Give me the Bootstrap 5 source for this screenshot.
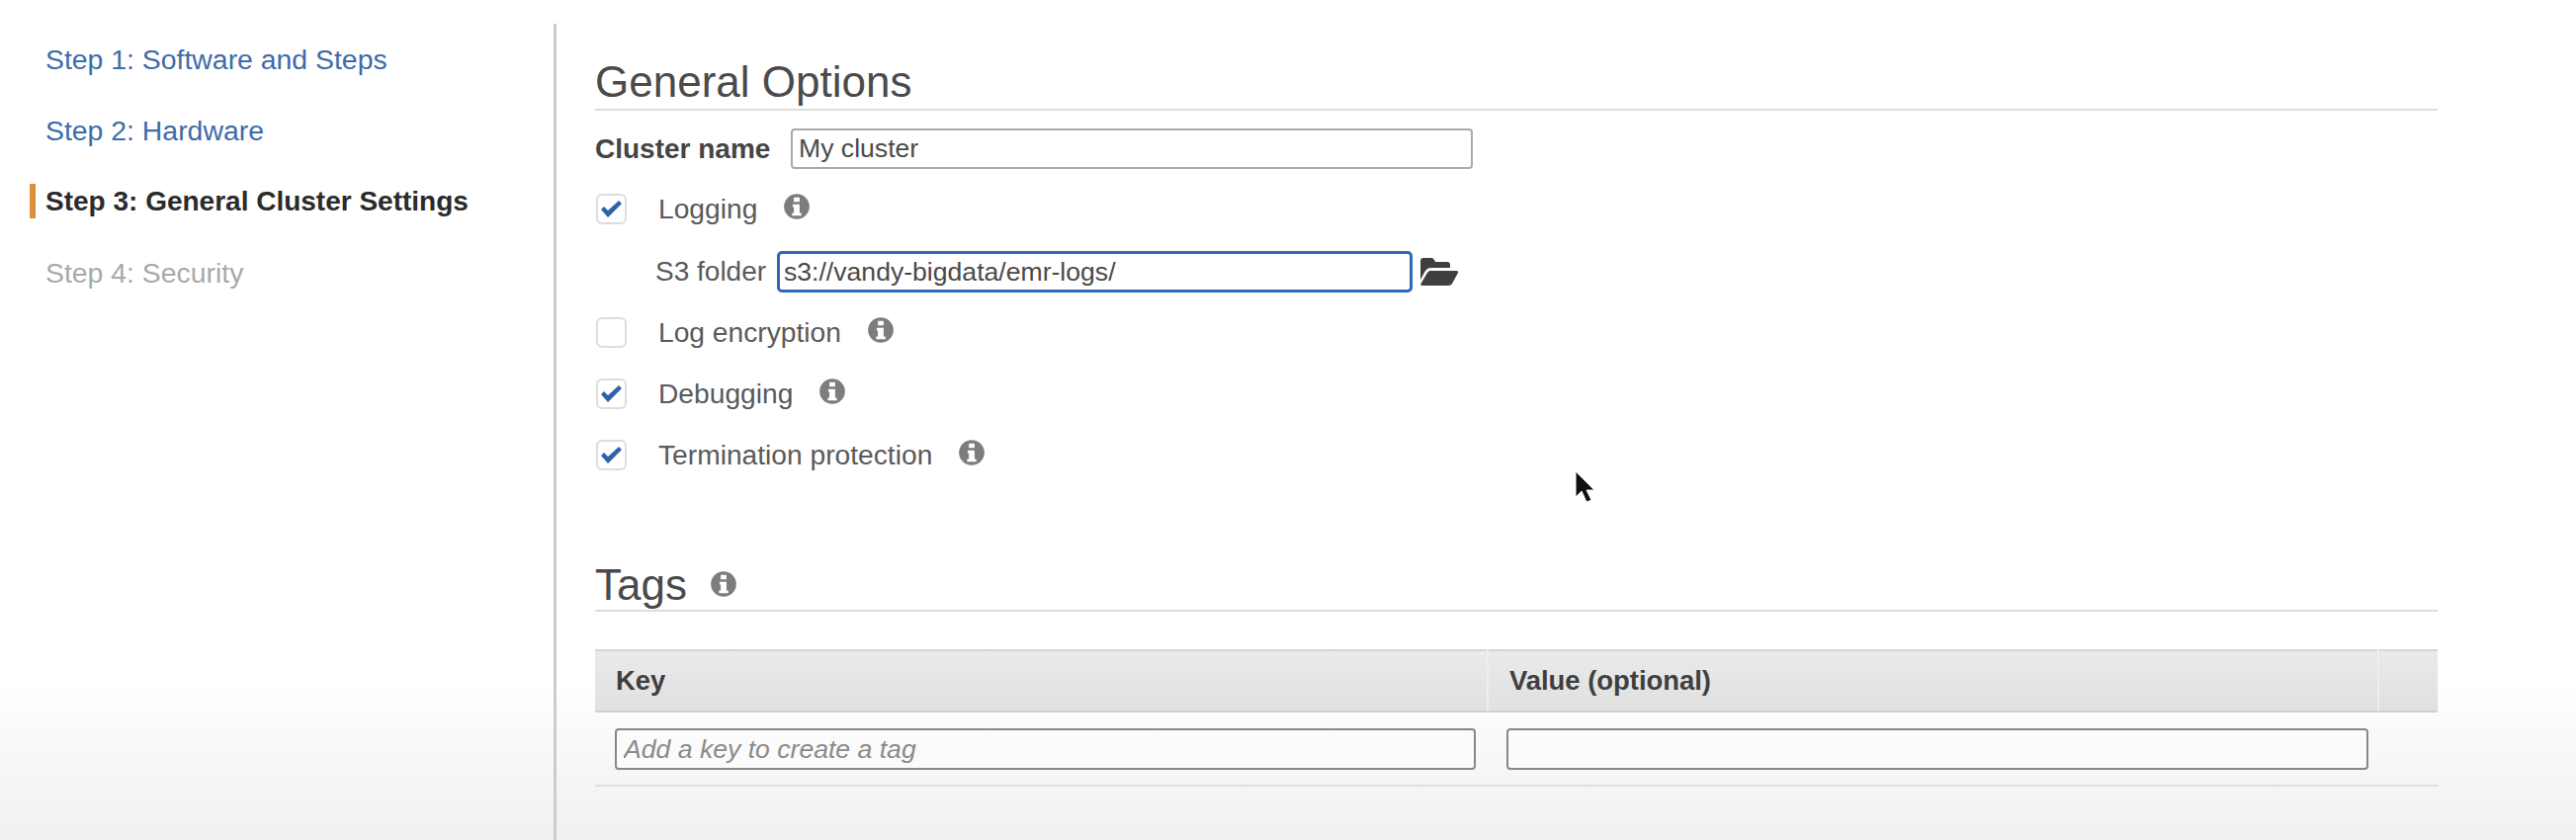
<!DOCTYPE html>
<html lang="en">
<head>
  <meta charset="UTF-8">
  <title>Create Cluster - General Cluster Settings</title>
  <link href="https://cdn.jsdelivr.net/npm/bootstrap@5.3.0/dist/css/bootstrap.min.css" rel="stylesheet">
  <style>
    html, body { height: 850px; overflow: hidden; }
    body {
      font-family: "Liberation Sans", Arial, sans-serif;
      font-size: 28px;
      color: #555;
      background: linear-gradient(#fff 0, #fff 690px, #f9f9f9 750px, #f0f0f0 850px);
      position: relative;
    }
    .wizard-wrap { padding-top: 24px; height: 850px; }
    .wizard-side { width: 563px; height: 826px; border-right: 3px solid #ccc; padding-top: 17px; flex: none; }
    .wizard-step { display: block; height: 72px; line-height: 38px; padding-left: 46px; text-decoration: none; color: #3f6ba8; font-size: 28.4px; }
    .wizard-step.current { font-weight: 700; color: #2b2b2b; position: relative; font-size: 28px; }
    .wizard-step.current::before { content: ""; position: absolute; left: 30px; top: 1px; width: 6px; height: 35px; background: #dd8e3c; }
    .wizard-step.off { color: #a9a9a9; }
    .wizard-main { width: 1864px; margin-left: 39px; flex: none; }
    .sect-head { font-size: 44px; line-height: 50px; color: #4a4a4a; font-weight: 400; margin: 0; padding-top: 34px; height: 88px; border-bottom: 2px solid #ddd; }
    .name-row { height: 41px; margin-top: 18px; }
    .name-label { font-weight: 700; color: #444; width: 198px; flex: none; }
    .field-box.form-control { font-size: 26.6px; color: #4a4a4a; padding: 0 6px; border: 2px solid #aaa; border-radius: 4px; height: 41px; line-height: 36px; box-shadow: none; }
    .name-input.form-control { width: 690px; }
    .opt-row { height: 62px; }
    .opt-row.first { margin-top: 9px; }
    .tick-box { width: 31px; height: 31px; border: 2px solid #ddd; border-radius: 6px; background: #fff; flex: none; margin-left: 1px; }
    .opt-text { margin-left: 32px; color: #5a5a5a; font-size: 28.2px; }
    .info-dot { width: 28px; height: 28px; margin-left: 26px; margin-top: -4px; flex: none; }
    .s3-row { height: 42px; margin-top: 12px; margin-bottom: 9px; }
    .s3-label { width: 184px; padding-left: 61px; flex: none; color: #5a5a5a; white-space: nowrap; }
    .s3-input.form-control { width: 643px; border: 3px solid #2f68b5; border-radius: 5px; padding: 0 4px; height: 42px; }
    .folder-icon { width: 40px; height: 32px; margin-left: 7px; }
    .tags-head { margin-top: 78px; height: 50px; padding-top: 0; display: flex; align-items: flex-start; line-height: 46px; }
    .tags-head .info-dot { margin: 8px 0 0 23px; }
    .tag-table { width: 100%; margin: 38px 0 0; table-layout: fixed; border-collapse: collapse; --bs-table-bg: transparent; }
    .tag-table th { height: 62px; padding: 0 21px; font-size: 27.4px; color: #3f3f3f; background: linear-gradient(#eaeaea, #e0e0e0); border-top: 2px solid #d5d5d5; border-bottom: 2px solid #d0d0d0; border-right: 2px solid #eee; vertical-align: middle; }
    .tag-table th:last-child { border-right: 0; }
    .tag-table td { padding: 16px 12px 15px 20px; border-bottom: 2px solid #e0e0e0; vertical-align: top; }
    .tag-table td + td { padding: 16px 10px 15px 19px; }
    .tag-table td:last-child { padding: 0; }
    .tag-input.form-control { font-size: 26.6px; height: 42px; width: 100%; border: 2px solid #888; border-radius: 4px; padding: 0 7px; background: #fbfbfb; }
    .tag-input::placeholder { font-style: italic; color: #8a8a8a; opacity: 1; }
    .mouse-arrow { position: absolute; left: 1592px; top: 475px; width: 24px; height: 36px; }
  </style>
</head>
<body>
<svg width="0" height="0" class="d-block position-absolute">
  <defs>
    <symbol id="ico-info" viewBox="0 0 24 24">
      <path fill="#7d7d7d" fill-rule="evenodd" d="M12 1a11 11 0 1 0 0 22a11 11 0 0 0 0-22zM9.500 4h5v4h-5zM8.500 10h6v7.500h1.500V20H8v-2.500h1.500v-5h-1z"/>
    </symbol>
    <symbol id="ico-tick" viewBox="0 0 27 27">
      <path fill="#2f62ad" d="M3 14l3-3 4 4L21 5l3 3-14 14z"/>
    </symbol>
  </defs>
</svg>

<div class="d-flex wizard-wrap">
  <!-- steps -->
  <nav class="wizard-side">
    <a class="wizard-step" href="#">Step 1: Software and Steps</a>
    <a class="wizard-step" href="#">Step 2: Hardware</a>
    <a class="wizard-step current" href="#">Step 3: General Cluster Settings</a>
    <a class="wizard-step off" href="#">Step 4: Security</a>
  </nav>

  <main class="wizard-main">
    <h2 class="sect-head">General Options</h2>

    <div class="d-flex align-items-center name-row">
      <label class="name-label">Cluster name</label>
      <input class="form-control field-box name-input" type="text" value="My cluster">
    </div>

    <div class="d-flex align-items-center opt-row first">
      <span class="tick-box d-flex"><svg width="27" height="27"><use href="#ico-tick"/></svg></span>
      <span class="opt-text">Logging</span>
      <svg class="info-dot"><use href="#ico-info"/></svg>
    </div>

    <div class="d-flex align-items-center s3-row">
      <label class="s3-label">S3 folder</label>
      <input class="form-control field-box s3-input" type="text" value="s3://vandy-bigdata/emr-logs/">
      <svg class="folder-icon" viewBox="0 0 40 32">
        <path fill="#3f3f3f" d="M1 5q0-3 3-3h8q2 0 3 2l1 2h12q3 0 3 3v3H11q-3 0-5 3L1 24z"/>
        <path fill="#3f3f3f" d="M11 15h26q3 0 2 2l-6 11q-1 2-4 2H3q-3 0-1-3l6-10q1-2 3-2z"/>
      </svg>
    </div>

    <div class="d-flex align-items-center opt-row">
      <span class="tick-box"></span>
      <span class="opt-text">Log encryption</span>
      <svg class="info-dot"><use href="#ico-info"/></svg>
    </div>
    <div class="d-flex align-items-center opt-row">
      <span class="tick-box d-flex"><svg width="27" height="27"><use href="#ico-tick"/></svg></span>
      <span class="opt-text">Debugging</span>
      <svg class="info-dot"><use href="#ico-info"/></svg>
    </div>
    <div class="d-flex align-items-center opt-row">
      <span class="tick-box d-flex"><svg width="27" height="27"><use href="#ico-tick"/></svg></span>
      <span class="opt-text">Termination protection</span>
      <svg class="info-dot"><use href="#ico-info"/></svg>
    </div>

    <h2 class="sect-head tags-head">Tags <svg class="info-dot"><use href="#ico-info"/></svg></h2>

    <table class="table tag-table">
      <thead>
        <tr>
          <th style="width: 903px">Key</th>
          <th style="width: 901px">Value (optional)</th>
          <th></th>
        </tr>
      </thead>
      <tbody>
        <tr>
          <td><input class="form-control tag-input" type="text" placeholder="Add a key to create a tag"></td>
          <td><input class="form-control tag-input" type="text"></td>
          <td></td>
        </tr>
      </tbody>
    </table>
  </main>
</div>

<svg class="mouse-arrow" viewBox="0 0 24 36">
  <path fill="#111" stroke="#fff" stroke-width="1" d="M2 2v26l6-6 5 11 5-2-5-10h8z"/>
</svg>

<script src="https://cdn.jsdelivr.net/npm/bootstrap@5.3.0/dist/js/bootstrap.bundle.min.js"></script>
</body>
</html>
